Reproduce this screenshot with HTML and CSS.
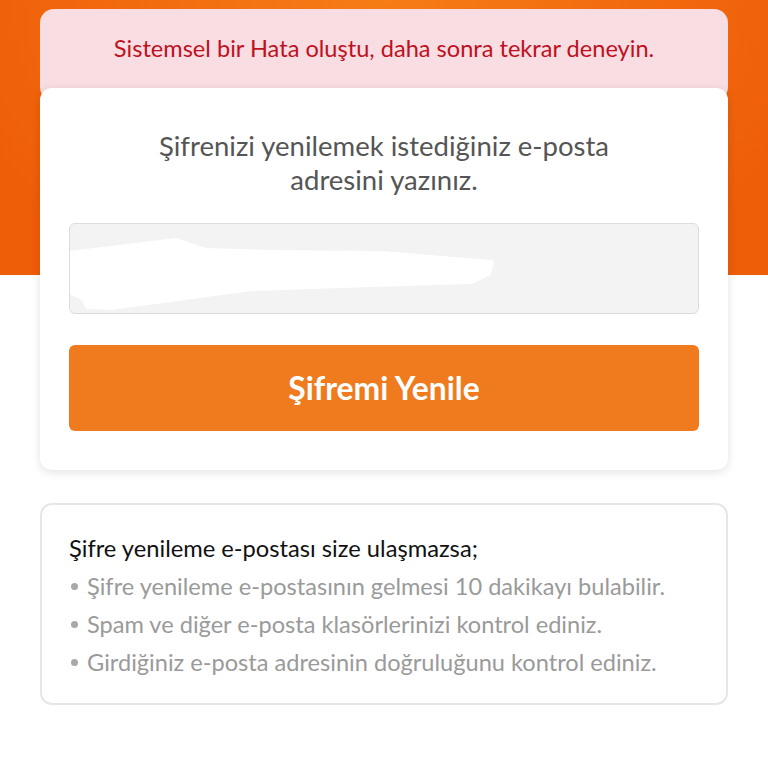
FILE: index.html
```html
<!DOCTYPE html>
<html lang="tr">
<head>
<meta charset="utf-8">
<title>Şifremi Yenile</title>
<link rel="stylesheet" href="styles.css">
</head>
<body>
<div class="page">
  <div class="alert">Sistemsel bir Hata oluştu, daha sonra tekrar deneyin.</div>
  <div class="card">
    <p class="lead">Şifrenizi yenilemek istediğiniz e-posta<br>adresini yazınız.</p>
    <div class="field">
      <svg class="mask" width="430" height="90" viewBox="0 0 430 90">
        <polygon points="0,30 106,17 136,27 201,29 311,30 421,39 418,49 401,57 301,60 181,64 41,83 18,82 14,74 0,67" fill="#ffffff" stroke="#ffffff" stroke-width="6" stroke-linejoin="round"/>
      </svg>
    </div>
    <button class="btn">Şifremi Yenile</button>
  </div>
  <div class="info">
    <h3 class="info-title">Şifre yenileme e-postası size ulaşmazsa;</h3>
    <ul class="info-list">
      <li>Şifre yenileme e-postasının gelmesi 10 dakikayı bulabilir.</li>
      <li>Spam ve diğer e-posta klasörlerinizi kontrol ediniz.</li>
      <li>Girdiğiniz e-posta adresinin doğruluğunu kontrol ediniz.</li>
    </ul>
  </div>
</div>
</body>
</html>
```
FILE: styles.css
```css
* { box-sizing: border-box; }
html, body { margin: 0; padding: 0; background: #ffffff; }
body { font-family: Lato, "Open Sans", sans-serif; }
.page {
  width: 768px;
  min-height: 768px;
  padding: 9px 40px 40px;
  background-color: #ffffff;
  background-image: radial-gradient(ellipse 60% 120% at 50% 0%, #f67c16 0%, #f26a0e 55%, #ee5d08 100%);
  background-size: 100% 275px;
  background-repeat: no-repeat;
}
.alert {
  background: #f8dde2;
  border-radius: 14px;
  color: #c0101e;
  font-size: 23.6px;
  line-height: 26px;
  text-align: center;
  padding: 26px 10px 40px;
}
.card {
  position: relative;
  margin-top: -13px;
  background: #ffffff;
  border-radius: 12px;
  box-shadow: 0 2px 10px rgba(0,0,0,0.12);
  padding: 41px 29px 39px;
}
.lead {
  margin: 0;
  text-align: center;
  color: #555555;
  font-size: 27.5px;
  line-height: 34px;
}
.field {
  margin-top: 26px;
  height: 91px;
  background: #f3f3f3;
  border: 1px solid #dcdcdc;
  border-radius: 6px;
  overflow: hidden;
}
.mask { display: block; }
.btn {
  display: block;
  width: 100%;
  margin-top: 31px;
  height: 86px;
  border: 0;
  border-radius: 6px;
  background: #f07a1e;
  color: #ffffff;
  font-family: Lato, "Open Sans", sans-serif;
  font-weight: 700;
  font-size: 31.8px;
}
.info {
  margin-top: 33px;
  border: 2px solid #e6e6e6;
  border-radius: 12px;
  padding: 24px 27px 22px;
}
.info-title {
  margin: 0;
  font-size: 23.7px;
  line-height: 38px;
  font-weight: 400;
  color: #111111;
}
.info-list {
  margin: 0;
  padding: 0;
  list-style: none;
}
.info-list li {
  position: relative;
  padding-left: 18px;
  font-size: 23.6px;
  line-height: 38px;
  color: #9a9a9a;
}
.info-list li::before {
  content: "";
  position: absolute;
  left: 2px;
  top: 16px;
  width: 7px;
  height: 7px;
  border-radius: 50%;
  background: #a8a8a8;
}
```
